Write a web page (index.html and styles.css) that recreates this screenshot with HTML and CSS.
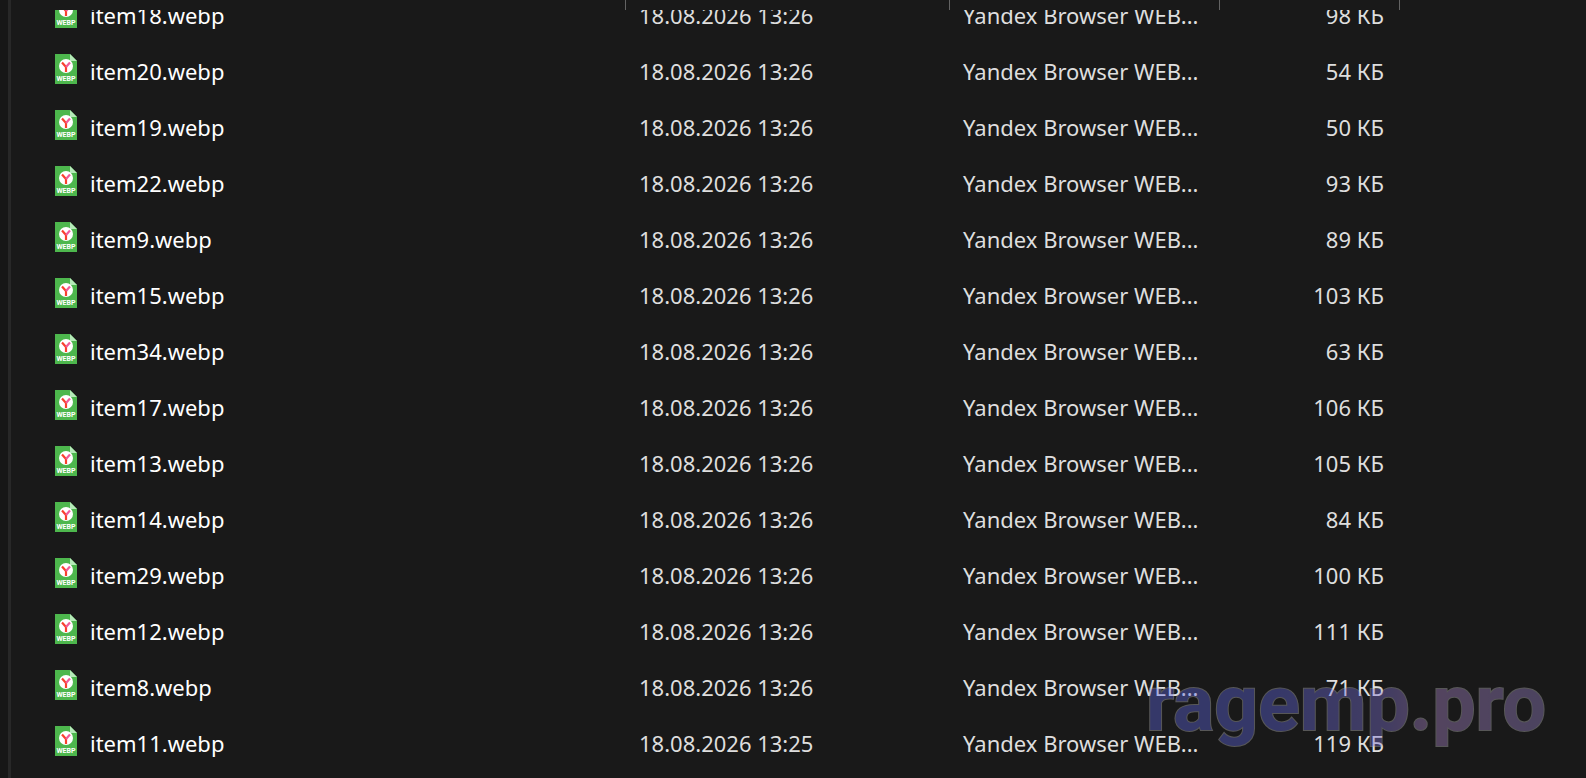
FILE: index.html
```html
<!DOCTYPE html>
<html lang="ru">
<head>
    <meta charset="UTF-8">
    <meta name="viewport" content="width=device-width, initial-scale=1.0">
    <title>Файлы</title>
    <link rel="stylesheet" href="styles.css">
</head>
<body>
    <svg class="sprite" aria-hidden="true">
        <symbol id="webp" viewBox="0 0 22 30">
            <path d="M0 0h15l7 7v23H0z" fill="#4db74d"/>
            <path d="M15 0l7 7h-7z" fill="#b5eab8"/>
            <circle cx="11" cy="12" r="7" fill="#fff"/>
            <path d="M7 8.500l4 4.500v5" fill="none" stroke="#f8412e" stroke-width="2.200"/>
            <path d="M11 13l4-4.500" fill="none" stroke="#f05a9a" stroke-width="2.200"/>
            <text class="icon-label" x="11" y="27" text-anchor="middle">WEBP</text>
        </symbol>
    </svg>

    <div class="explorer">
        <div class="splitter"></div>
        <main class="files">
            <div class="columns">
                <span class="col-name"></span>
                <span class="col-date"></span>
                <span class="col-type"></span>
                <span class="col-size"></span>
            </div>
            <div class="list">
                <table class="table">
                    <colgroup>
                        <col class="col-name">
                        <col class="col-date">
                        <col class="col-type">
                        <col class="col-size">
                        <col>
                    </colgroup>
                    <tbody id="rows"></tbody>
                </table>
            </div>
        </main>
    </div>

    <svg class="watermark" viewBox="0 0 400 90">
        <defs>
            <linearGradient id="mark">
                <stop offset="0" stop-color="#6067e2"/>
                <stop offset="0.300" stop-color="#6067e2"/>
                <stop offset="0.600" stop-color="#7f72d0"/>
                <stop offset="0.700" stop-color="#ad85c7"/>
                <stop offset="1" stop-color="#9783c9"/>
            </linearGradient>
        </defs>
        <text x="400" y="60" text-anchor="end" fill="url(#mark)">ragemp.pro</text>
    </svg>

    <script src="script.js"></script>
</body>
</html>
```

FILE: styles.css
```css
body {
    margin: 0;
    background-color: #191919;
    color: #dedede;
    font-family: 'Segoe UI', 'Noto Sans', sans-serif;
    font-size: 22px;
    line-height: 30px;
    overflow: hidden;
}

.sprite {
    position: absolute;
    width: 0;
    height: 0;
}

.explorer {
    display: flex;
    height: 100vh;
}

.splitter {
    width: 8px;
    background-color: #171717;
    border-right: 3px solid #282828;
}

.files {
    flex: 1;
    display: flex;
    flex-direction: column;
    min-width: 0;
}

.columns {
    display: flex;
    height: 10px;
}

.columns span {
    box-sizing: border-box;
    border-right: 1px solid #636363;
}

.col-name {
    width: 615px;
}

.col-date {
    width: 324px;
}

.col-type {
    width: 270px;
}

.col-size {
    width: 180px;
}

/* список прокручен, первая строка видна частично */
.list {
    flex: 1;
    min-height: 0;
    overflow: hidden;
}

.table {
    width: 100%;
    margin-top: -23px;
    table-layout: fixed;
    border-collapse: collapse;
}

.table td {
    height: 56px;
    padding: 0 0 0 13px;
    white-space: nowrap;
}

.table .name {
    padding-left: 44px;
    color: #fff;
}

.table .size {
    padding: 0 16px 0 0;
    text-align: right;
}

.file {
    display: flex;
    align-items: center;
    gap: 13px;
}

.file-icon {
    width: 22px;
    height: 30px;
    margin-bottom: 4px;
}

.icon-label {
    font-family: Roboto, sans-serif;
    font-size: 7px;
    font-weight: 700;
    fill: #fff;
}

.watermark {
    position: fixed;
    right: 40px;
    bottom: 18px;
    width: 400px;
    height: 90px;
    overflow: visible;
    opacity: 0.4;
    pointer-events: none;
}

.watermark text {
    font-family: Roboto, sans-serif;
    font-size: 77px;
    font-weight: 700;
    stroke: #b4b4b4;
    stroke-width: 2px;
    paint-order: stroke;
}
```

FILE: script.js
```js
const files = [
    ['item18.webp', '18.08.2026 13:26', 98],
    ['item20.webp', '18.08.2026 13:26', 54],
    ['item19.webp', '18.08.2026 13:26', 50],
    ['item22.webp', '18.08.2026 13:26', 93],
    ['item9.webp', '18.08.2026 13:26', 89],
    ['item15.webp', '18.08.2026 13:26', 103],
    ['item34.webp', '18.08.2026 13:26', 63],
    ['item17.webp', '18.08.2026 13:26', 106],
    ['item13.webp', '18.08.2026 13:26', 105],
    ['item14.webp', '18.08.2026 13:26', 84],
    ['item29.webp', '18.08.2026 13:26', 100],
    ['item12.webp', '18.08.2026 13:26', 111],
    ['item8.webp', '18.08.2026 13:26', 71],
    ['item11.webp', '18.08.2026 13:25', 119]
];

document.getElementById('rows').innerHTML = files.map(([name, date, size]) => `
    <tr>
        <td class="name"><div class="file"><svg class="file-icon"><use href="#webp"/></svg><span>${name}</span></div></td>
        <td>${date}</td>
        <td>Yandex Browser WEB...</td>
        <td class="size">${size} КБ</td>
        <td></td>
    </tr>`).join('');
```
